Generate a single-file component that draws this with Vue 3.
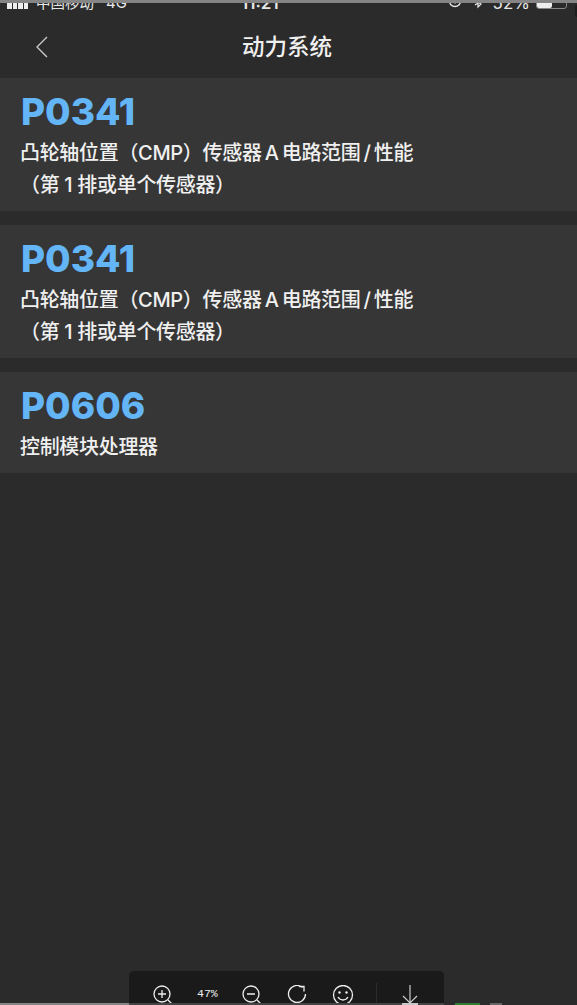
<script setup>
const items = [
  { code: 'P0341', lines: ['凸轮轴位置（CMP）传感器\u2009A\u2009电路范围\u2009/\u2009性能', '（第 1 排或单个传感器）'] },
  { code: 'P0341', lines: ['凸轮轴位置（CMP）传感器\u2009A\u2009电路范围\u2009/\u2009性能', '（第 1 排或单个传感器）'] },
  { code: 'P0606', lines: ['控制模块处理器'] }
]
</script>

<template>
  <div class="page">
    <div class="top-strip"></div>
    <span class="edge-dot"></span>
    <div class="status">
      <div class="status-left">
        <span class="signal"><i></i><i></i><i></i><i></i></span>
        <span class="carrier">中国移动</span>
        <span class="net">4G</span>
      </div>
      <span class="time">11:21</span>
      <div class="status-right">
        <svg width="14" height="14" viewBox="0 0 14 14" class="lock"><circle cx="7" cy="6" r="5.5" fill="none" stroke="#e8e8e8" stroke-width="1.4"/><circle cx="7" cy="6" r="2.4" fill="#e8e8e8"/></svg>
        <svg width="9" height="12" viewBox="0 0 9 12" class="bt"><path d="M1 3l6 4-3 3V1l3 3-6 4" fill="none" stroke="#e8e8e8" stroke-width="1.2"/></svg>
        <span class="pct-bat">52%</span>
        <span class="battery"><b></b></span>
      </div>
    </div>
    <header class="nav">
      <svg class="back" width="14" height="24" viewBox="0 0 14 24"><path d="M12 2 2 12l10 10" fill="none" stroke="#c9c9c9" stroke-width="1.4"/></svg>
      <h1>动力系统</h1>
    </header>
    <main class="list">
      <section v-for="(item, i) in items" :key="i" class="card">
        <div class="code">{{ item.code }}</div>
        <p v-for="line in item.lines" :key="line" class="desc">{{ line }}</p>
      </section>
    </main>
    <div class="toolbar">
      <svg width="24" height="28" viewBox="0 0 24 28"><circle cx="9" cy="9" r="8" fill="none" stroke="#eee" stroke-width="1.3"/><path d="M5 9h8M9 5v8M15 15l6 6" fill="none" stroke="#eee" stroke-width="1.3"/></svg>
      <span class="pct">47%</span>
      <svg width="24" height="28" viewBox="0 0 24 28"><circle cx="9" cy="9" r="8" fill="none" stroke="#eee" stroke-width="1.3"/><path d="M5 9h8M15 15l6 6" fill="none" stroke="#eee" stroke-width="1.3"/></svg>
      <svg width="22" height="28" viewBox="0 0 22 28"><path d="M15.5 2.5A8.5 8.5 0 1 0 18.5 9M12 1.5h5v5" fill="none" stroke="#eee" stroke-width="1.3"/></svg>
      <svg width="22" height="28" viewBox="0 0 22 28"><circle cx="11" cy="10" r="9.5" fill="none" stroke="#eee" stroke-width="1.3"/><circle cx="7.5" cy="7.5" r="1.2" fill="#eee"/><circle cx="14.5" cy="7.5" r="1.2" fill="#eee"/><path d="M6 12c2.5 4 7.5 4 10 0" fill="none" stroke="#eee" stroke-width="1.3"/></svg>
      <span class="sep"></span>
      <svg width="18" height="28" viewBox="0 0 18 28"><path d="M9 0v18M2 11l7 7 7-7" fill="none" stroke="#ccc" stroke-width="1.2"/></svg>
    </div>
    <div class="bottom-strip">
      <span class="s-gray"></span>
      <span class="s-under"></span>
      <span class="s-white"></span>
      <span class="s-under2"></span>
      <span class="s-bg1"></span>
      <span class="s-green"></span>
      <span class="s-bg2"></span>
      <span class="s-gray2"></span>
    </div>
  </div>
</template>

<style>
html, body { margin: 0; background: #2b2b2b; }
</style>

<style scoped>
.page {
  position: relative;
  width: 577px;
  height: 1005px;
  overflow: hidden;
  background: #2b2b2b;
  font-family: "Inter", "Noto Sans CJK SC", sans-serif;
  color: #f2f2f2;
}
.top-strip { height: 3px; background: #858585; }
.edge-dot { position: absolute; right: 0; top: 5px; width: 2px; height: 12px; background: #1e1e1e; border-radius: 2px 0 0 2px; }
.status {
  height: 8px;
  overflow: hidden;
  display: flex;
  justify-content: space-between;
  align-items: flex-end;
  padding: 0 10px 0 7px;
  font-size: 15px;
  line-height: 16px;
  color: #e8e8e8;
  position: relative;
}
.status-left, .status-right { display: flex; align-items: flex-end; height: 16px; flex: none; }
.signal { display: flex; gap: 1px; margin-right: 8px; margin-bottom: 2px; }
.signal i { width: 4.5px; height: 8px; background: #eee; display: block; }
.carrier { font-size: 14.5px; margin-right: 12px; }
.net { font-size: 15px; }
.time { position: absolute; left: 241px; bottom: 0; font-size: 17px; font-weight: 600; }
.lock { margin-right: 12px; margin-bottom: 2px; }
.bt { margin-right: 10px; margin-bottom: 2px; }
.pct-bat { font-size: 17px; margin-right: 6px; }
.battery { width: 29px; height: 12px; border: 1px solid #888; border-radius: 3px; display: block; margin-bottom: 2px; }
.battery b { display: block; width: 15px; height: 100%; background: #eee; border-radius: 2px; }
.nav {
  height: 67px;
  padding-top: 4px;
  box-sizing: border-box;
  display: flex;
  align-items: center;
  justify-content: center;
  position: relative;
}
.nav h1 { margin: 0 3px 0 0; font-size: 22.5px; line-height: 30px; font-weight: 500; color: #f0f0f0; }
.back { position: absolute; left: 35px; top: 24px; }
.list { display: flex; flex-direction: column; gap: 14px; }
.card { background: #363636; padding: 14px 21px 10px; }
.code { font-size: 37px; line-height: 40px; font-weight: 800; color: #63b5f6; margin-bottom: 5px; }
.desc { margin: 0 0 0 -1px; font-size: 20px; letter-spacing: -0.32px; line-height: 32px; font-weight: 500; color: #f0f0f0; white-space: nowrap; }
.toolbar {
  position: absolute;
  left: 129px;
  top: 971px;
  width: 315px;
  height: 34px;
  box-sizing: border-box;
  background: #1a1a1a;
  border-radius: 5px 5px 0 0;
  display: flex;
  align-items: flex-start;
  padding-top: 14px;
  padding-left: 24px;
  overflow: hidden;
}
.toolbar > svg { flex: none; }
.toolbar > svg:nth-of-type(1) { margin-right: 20px; }
.toolbar > svg:nth-of-type(2) { margin-right: 21px; }
.toolbar > svg:nth-of-type(3) { margin-right: 23px; }
.toolbar > svg:nth-of-type(4) { margin-right: 22px; }
.pct { font-family: "Liberation Mono", monospace; font-size: 11.5px; color: #eee; width: 24px; margin-right: 21px; margin-top: 2px; }
.sep { width: 1px; height: 34px; background: #2c2c2c; margin-top: -2px; margin-right: 24px; }
.bottom-strip { position: absolute; left: 0; right: 0; bottom: 0; height: 2px; display: flex; }
.bottom-strip span { display: block; height: 100%; flex: none; }
.s-gray { width: 129px; background: #858585; }
.s-under { width: 273px; background: #444; }
.s-white { width: 16px; background: #c8c8c8; }
.s-under2 { width: 26px; background: #444; }
.s-bg1 { width: 11px; }
.s-green { width: 25px; background: #2e7d32; }
.s-bg2 { width: 10px; }
.s-gray2 { width: 12px; background: #666; }
</style>
